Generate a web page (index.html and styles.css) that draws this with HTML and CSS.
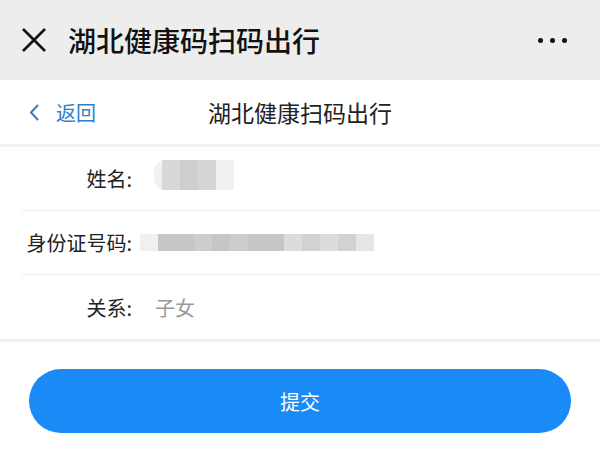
FILE: index.html
```html
<!DOCTYPE html>
<html lang="zh-CN">
<head>
  <meta charset="UTF-8" />
  <meta name="viewport" content="width=device-width, initial-scale=1.0"/>
  <title>湖北健康码扫码出行</title>
  <link rel="stylesheet" href="styles.css">
</head>
<body>

  <header class="topbar">
    <svg class="close" width="24" height="24" viewBox="0 0 24 24">
      <path d="M1 1 L23 23 M23 1 L1 23" stroke="#111" stroke-width="2.6" fill="none" />
    </svg>
    <h1>湖北健康码扫码出行</h1>
    <div class="more"><i></i><i></i><i></i></div>
  </header>

  <nav class="navbar">
    <a class="back">
      <svg width="10" height="17" viewBox="0 0 10 17">
        <path d="M9 1 L2 8.5 L9 16" stroke="#2f80c8" stroke-width="2" fill="none" />
      </svg>
      <span>返回</span>
    </a>
    <h2>湖北健康扫码出行</h2>
  </nav>

  <section class="form">
    <div class="row">
      <label>姓名:</label>
      <div class="blur blur-name"><i></i><i></i><i></i></div>
    </div>
    <div class="row">
      <label>身份证号码:</label>
      <div class="blur blur-id"><i></i><i></i><i></i><i></i><i></i><i></i><i></i><i></i><i></i><i></i><i></i><i></i></div>
    </div>
    <div class="row">
      <label>关系:</label>
      <span class="value">子女</span>
    </div>
  </section>

  <div class="actions">
    <button class="submit">提交</button>
  </div>

</body>
</html>
```

FILE: styles.css
```css
* {
  box-sizing: border-box;
}

body {
  margin: 0;
  background: #fff;
  font-family: "Noto Sans CJK SC", "Noto Sans", sans-serif;
  color: #222;
}

.topbar {
  height: 80px;
  background: #ededed;
  display: flex;
  align-items: center;
  padding: 0 33px 0 22px;
}

.topbar .close {
  flex: none;
}

.topbar h1 {
  margin: 0 0 0 22px;
  font-size: 28px;
  font-weight: 500;
  color: #111;
  flex: 1;
}

.more {
  display: flex;
  gap: 7px;
}

.more i {
  width: 5px;
  height: 5px;
  border-radius: 50%;
  background: #111;
}

.navbar {
  height: 67px;
  display: flex;
  align-items: center;
  position: relative;
  padding-left: 29px;
  border-bottom: 3px solid #f2f2f2;
}

.back {
  display: flex;
  align-items: center;
  gap: 17px;
  color: #2f80c8;
  font-size: 20px;
}

.navbar h2 {
  position: absolute;
  left: 0;
  right: 0;
  margin: 0;
  text-align: center;
  font-size: 23px;
  font-weight: 400;
  color: #222;
  pointer-events: none;
}

.form {
  border-bottom: 3px solid #f2f2f2;
}

.row {
  height: 64px;
  display: flex;
  align-items: center;
  margin-left: 22px;
  border-bottom: 1px solid #ececec;
  font-size: 20px;
}

.row:last-child {
  border-bottom: none;
}

.row label {
  width: 110px;
  text-align: right;
  color: #222;
  flex: none;
  white-space: nowrap;
}

.value {
  margin-left: 23px;
  color: #999;
}

.blur {
  display: flex;
  height: 20px;
}

.blur i {
  width: 16px;
  height: 100%;
  background: #d8d8d8;
}

.blur-name {
  margin-left: 22px;
  height: 30px;
  margin-top: -8px;
  border-radius: 12px 0 0 12px;
  background: #f1f1f1;
  padding-left: 8px;
  padding-right: 18px;
}

.blur-name i {
  width: 18px;
}

.blur-name i:nth-child(2) {
  background: #cfcfcf;
}

.blur-name i:nth-child(3) {
  background: #d6d6d6;
}

.blur-id {
  margin-left: 8px;
  height: 17px;
  background: #f0f0f0;
  padding-left: 18px;
}

.blur-id i {
  width: 18px;
}

.blur-id i:nth-child(-n+7) {
  background: #c6c6c6;
}

.blur-id i:nth-child(3),
.blur-id i:nth-child(5) {
  background: #cdcdcd;
}

.blur-id i:nth-child(8),
.blur-id i:nth-child(10) {
  background: #dcdcdc;
}

.blur-id i:nth-child(9),
.blur-id i:nth-child(11) {
  background: #d2d2d2;
}

.blur-id i:nth-child(12) {
  background: #e6e6e6;
}

.actions {
  padding: 27px 29px;
}

.submit {
  width: 100%;
  height: 64px;
  border: none;
  border-radius: 32px;
  background: #1a8af7;
  color: #fff;
  font-family: inherit;
  font-size: 20px;
}
```
